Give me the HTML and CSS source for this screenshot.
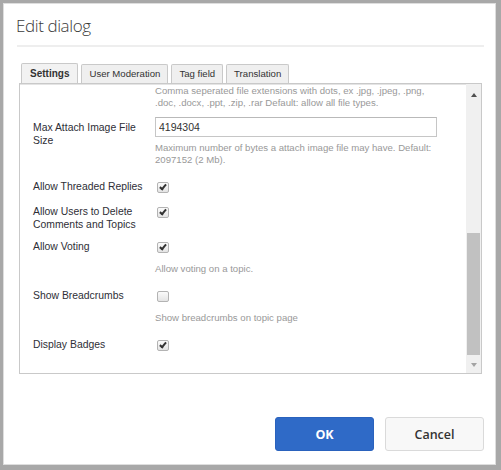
FILE: index.html
```html
<!DOCTYPE html>
<html lang="en">

<head>
    <meta charset="UTF-8">
    <title>Edit dialog</title>
    <link rel="stylesheet" href="styles.css">
</head>

<body>
    <div class="dialog">
        <h2 class="dialog-title">Edit dialog</h2>
        <div class="divider"></div>

        <!-- Tabs -->
        <div class="tabs">
            <div class="tab active">Settings</div>
            <div class="tab">User Moderation</div>
            <div class="tab">Tag field</div>
            <div class="tab">Translation</div>
        </div>

        <div class="panel">
            <div class="panel-content">
                <div class="group first">
                    <div></div>
                    <div class="field">
                        <div class="help">Comma seperated file extensions with dots, ex .jpg, .jpeg, .png,<br>.doc, .docx, .ppt, .zip, .rar Default: allow all file types.</div>
                    </div>
                </div>

                <div class="group input-group">
                    <label class="label">Max Attach Image File Size</label>
                    <div class="field">
                        <input type="text" class="text-input" value="4194304">
                        <div class="help help-tight">Maximum number of bytes a attach image file may have. Default:<br>2097152 (2 Mb).</div>
                    </div>
                </div>

                <div class="group after-help">
                    <label class="label">Allow Threaded Replies</label>
                    <div class="field"><span class="check checked"></span></div>
                </div>

                <div class="group">
                    <label class="label">Allow Users to Delete<br>Comments and Topics</label>
                    <div class="field"><span class="check checked"></span></div>
                </div>

                <div class="group short">
                    <label class="label">Allow Voting</label>
                    <div class="field">
                        <span class="check checked"></span>
                        <div class="help">Allow voting on a topic.</div>
                    </div>
                </div>

                <div class="group after-help">
                    <label class="label">Show Breadcrumbs</label>
                    <div class="field">
                        <span class="check"></span>
                        <div class="help">Show breadcrumbs on topic page</div>
                    </div>
                </div>

                <div class="group after-help">
                    <label class="label">Display Badges</label>
                    <div class="field"><span class="check checked"></span></div>
                </div>
            </div>

            <!-- scrollbar -->
            <div class="scrollbar">
                <div class="scroll-btn up"><span class="arrow-up"></span></div>
                <div class="scroll-track"><div class="scroll-thumb"></div></div>
                <div class="scroll-btn down"><span class="arrow-down"></span></div>
            </div>
        </div>

        <div class="actions">
            <button class="btn btn-primary">OK</button>
            <button class="btn">Cancel</button>
        </div>
    </div>
</body>
</html>
```

FILE: styles.css
```css
body {
    margin: 0;
    padding: 0;
    background: #a8a8a8;
    font-family: 'Liberation Sans', Arial, sans-serif;
}

.dialog {
    margin: 3px 5px 5px 3px;
    height: 462px;
    box-sizing: border-box;
    border: 1px solid #dedede;
    background: #fff;
    padding: 0 11px 13px 12px;
    display: flex;
    flex-direction: column;
}

.dialog-title {
    margin: 0;
    padding-top: 10px;
    font-family: 'Open Sans', sans-serif;
    font-weight: 300;
    font-size: 17px;
    letter-spacing: -0.4px;
    color: #3a3a3a;
    line-height: 23px;
}

.divider {
    height: 2px;
    background: #eeeeee;
    margin: 8px 0 0 1px;
}

/* tabs */
.tabs {
    display: flex;
    gap: 2px;
    margin: 16px 0 0 5px;
    align-items: flex-end;
}

.tab {
    height: 18px;
    line-height: 18px;
    padding: 0 7px;
    font-size: 9.6px;
    color: #333;
    background: #efefef;
    border: 1px solid #c9c9c9;
    border-bottom: none;
    border-radius: 2px 2px 0 0;
}

.tab.active {
    height: 19px;
    line-height: 20px;
    padding: 0 8px;
    font-weight: bold;
    font-size: 10px;
    background: #f2f2f2;
}

.tab + .tab {
    margin-left: 1px;
}

/* panel */
.panel {
    margin: 0 2px 0 3px;
    height: 291px;
    box-sizing: border-box;
    border: 1px solid #c9c9c9;
    box-shadow: inset 0 1px 0 #e4e4e4;
    display: flex;
    overflow: hidden;
}

.panel-content {
    flex: 1;
    padding: 1px 0 0 13px;
}

.group {
    display: grid;
    grid-template-columns: 122px 1fr;
    margin-top: 12px;
}

.group.first {
    margin-top: 0;
}

.group.input-group {
    margin-top: 8px;
}

.group.after-help {
    margin-top: 14px;
}

.group.short {
    margin-top: 9px;
}

.label {
    font-size: 10.4px;
    line-height: 13px;
    color: #2e2e36;
}

.input-group .label {
    padding-top: 4px;
}

.help {
    font-size: 9.6px;
    line-height: 12px;
    color: #999;
    margin-top: 10px;
}

.group.first .help {
    margin-top: 0;
}

.help-tight {
    margin-top: 5px;
}

.text-input {
    display: block;
    width: 282px;
    height: 20px;
    box-sizing: border-box;
    margin: 0;
    padding: 0 3px;
    border: 1px solid #c6c6c6;
    border-top-color: #b9b9b9;
    font-family: 'Liberation Sans', Arial, sans-serif;
    font-size: 10.5px;
    color: #333;
    outline: none;
}

.check {
    display: block;
    width: 10px;
    height: 9px;
    margin: 2px 0 0 2px;
    border: 1px solid #b3b3b3;
    border-radius: 2px;
    background: linear-gradient(#fbfbfb, #e4e4e4);
    position: relative;
}

.check.checked::after {
    content: "";
    position: absolute;
    left: 3px;
    top: 0px;
    width: 2px;
    height: 5px;
    border: solid #333;
    border-width: 0 2px 2px 0;
    transform: rotate(40deg);
}

/* scrollbar */
.scrollbar {
    width: 15px;
    background: #f0f0f0;
    display: flex;
    flex-direction: column;
}

.scroll-btn {
    display: flex;
    justify-content: center;
    align-items: center;
}

.scroll-btn.up {
    height: 21px;
}

.scroll-btn.down {
    height: 17px;
}

.arrow-up {
    width: 0;
    height: 0;
    border-left: 3.5px solid transparent;
    border-right: 3.5px solid transparent;
    border-bottom: 4px solid #505050;
}

.arrow-down {
    width: 0;
    height: 0;
    border-left: 3.5px solid transparent;
    border-right: 3.5px solid transparent;
    border-top: 4px solid #a3a3a3;
}

.scroll-track {
    flex: 1;
    padding-top: 128px;
}

.scroll-thumb {
    height: 122px;
    margin: 0 1px;
    background: #c1c1c1;
}

/* buttons */
.actions {
    margin-top: auto;
    display: flex;
    justify-content: flex-end;
    gap: 11px;
}

.btn {
    width: 99px;
    height: 34px;
    border: 1px solid #dadada;
    border-radius: 3px;
    background: #f8f8f8;
    color: #333;
    font-family: 'Open Sans', sans-serif;
    font-weight: 600;
    font-size: 12.5px;
    cursor: pointer;
}

.btn-primary {
    background: #2f6ac7;
    border-color: #2a62bd;
    color: #fff;
    font-weight: bold;
}
```
